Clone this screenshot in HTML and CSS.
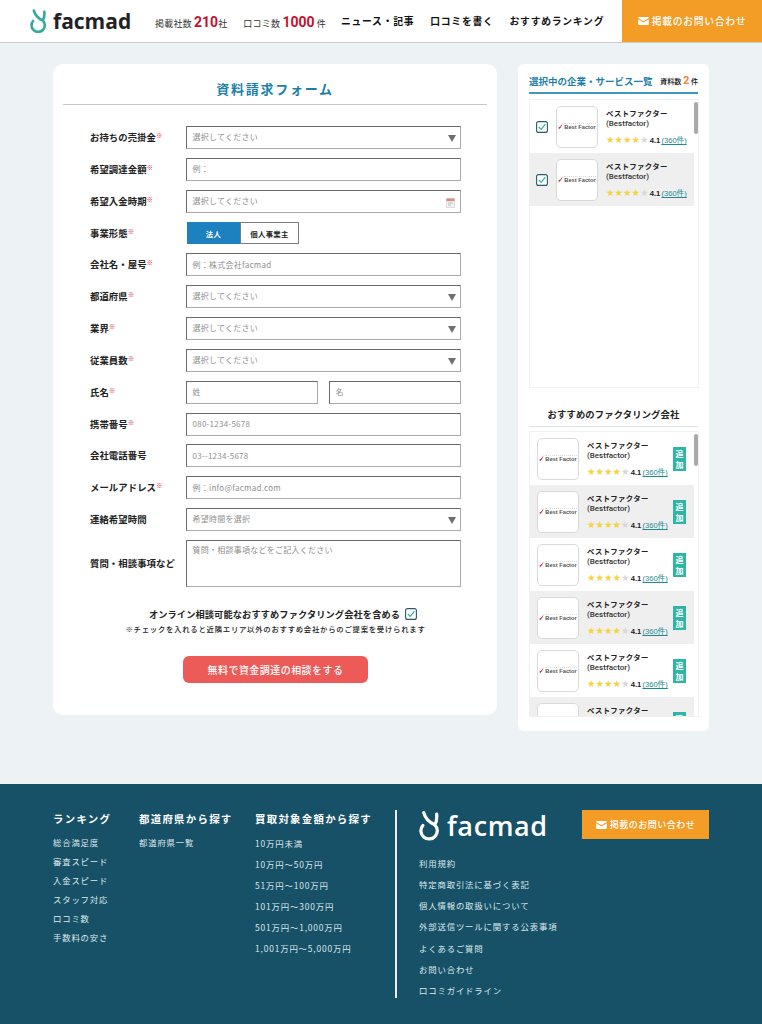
FILE: index.html
```html
<!DOCTYPE html>
<html lang="ja">
<head>
<meta charset="utf-8">
<title>資料請求フォーム</title>
<link rel="stylesheet" href="styles.css">
</head>
<body>
<svg class="defs" width="0" height="0" aria-hidden="true">
  <defs>
    <symbol id="logo-mark" viewBox="0 0 22 31">
      <path d="M4 15.5 A8.6 8.6 0 1 0 16.5 14.8 M5 2 C6.5 8 10.5 12 16.5 14.8 M18.5 3.5 C19 8 18.5 11.5 16.5 14.8" fill="none" stroke="currentColor" stroke-width="3.4" stroke-linecap="round" stroke-linejoin="round"/>
    </symbol>
    <symbol id="mail" viewBox="0 0 12 9">
      <path d="M0 1 A1 1 0 0 1 1 0 H11 A1 1 0 0 1 12 1 L6 4.8 Z M0 2.4 V8 A1 1 0 0 0 1 9 H11 A1 1 0 0 0 12 8 V2.4 L6 6.2 Z" fill="currentColor"/>
    </symbol>
    <symbol id="check" viewBox="0 0 12 12">
      <rect x=".6" y=".6" width="10.8" height="10.8" rx="2" fill="#fff" stroke="#2b5a66" stroke-width="1.1"/>
      <path d="M2.8 6 L5.2 8.4 L9.4 3.2" fill="none" stroke="#2fb3a5" stroke-width="1.2"/>
    </symbol>
    <symbol id="caret" viewBox="0 0 8 7">
      <path d="M0 0 H8 L4 7 Z" fill="#6f6f6f"/>
    </symbol>
    <symbol id="bf-swoosh" viewBox="0 0 5 7">
      <path d="M4.6 0.3 C4 3 2.6 5.6 0.3 6.6 C1.5 5 0.6 4.6 0.2 4.6 C1.8 4.4 3.4 2.6 4.6 0.3 Z" fill="#b8304a"/>
    </symbol>
  </defs>
</svg>

<header class="site-header">
  <a class="logo logo-head">
    <svg class="logo-mark"><use href="#logo-mark"/></svg>
    <span class="logo-text">facmad</span>
  </a>
  <div class="stat">掲載社数 <b>210</b>社</div>
  <div class="stat stat-2">口コミ数 <b>1000</b> 件</div>
  <nav class="head-nav">
    <a>ニュース・記事</a>
    <a>口コミを書く</a>
    <a>おすすめランキング</a>
  </nav>
  <a class="head-cta"><svg class="mail"><use href="#mail"/></svg>掲載のお問い合わせ</a>
</header>

<main class="main">
  <section class="form-card">
    <h1 class="form-title">資料請求フォーム</h1>
    <form class="form">
      <div class="row"><div class="lab">お持ちの売掛金<i>※</i></div><div class="field sel">選択してください<svg class="caret"><use href="#caret"/></svg></div></div>
      <div class="row"><div class="lab">希望調達金額<i>※</i></div><div class="field">例：</div></div>
      <div class="row"><div class="lab">希望入金時期<i>※</i></div><div class="field sel">選択してください
        <svg class="cal" viewBox="0 0 9 10"><rect x=".5" y=".5" width="8" height="9" fill="#f3f3f3" stroke="#ddd"/><rect x=".5" y=".5" width="8" height="2.6" fill="#d98b80"/><path d="M2 5h5M2 7h3" stroke="#aaa" stroke-width=".8"/></svg></div></div>
      <div class="row"><div class="lab">事業形態<i>※</i></div>
        <div class="toggle"><span class="tg on">法人</span><span class="tg">個人事業主</span></div></div>
      <div class="row"><div class="lab">会社名・屋号<i>※</i></div><div class="field">例：株式会社facmad</div></div>
      <div class="row"><div class="lab">都道府県<i>※</i></div><div class="field sel">選択してください<svg class="caret"><use href="#caret"/></svg></div></div>
      <div class="row"><div class="lab">業界<i>※</i></div><div class="field sel">選択してください<svg class="caret"><use href="#caret"/></svg></div></div>
      <div class="row"><div class="lab">従業員数<i>※</i></div><div class="field sel">選択してください<svg class="caret"><use href="#caret"/></svg></div></div>
      <div class="row"><div class="lab">氏名<i>※</i></div><div class="pair"><div class="field">姓</div><div class="field">名</div></div></div>
      <div class="row"><div class="lab">携帯番号<i>※</i></div><div class="field">080-1234-5678</div></div>
      <div class="row"><div class="lab">会社電話番号</div><div class="field">03--1234-5678</div></div>
      <div class="row"><div class="lab">メールアドレス<i>※</i></div><div class="field">例：info@facmad.com</div></div>
      <div class="row"><div class="lab">連絡希望時間</div><div class="field sel">希望時間を選択<svg class="caret"><use href="#caret"/></svg></div></div>
      <div class="row row-area"><div class="lab">質問・相談事項など</div><div class="field area">質問・相談事項などをご記入ください</div></div>
      <div class="online"><span>オンライン相談可能なおすすめファクタリング会社を含める</span><svg class="check-sm"><use href="#check"/></svg></div>
      <p class="note">※チェックを入れると近隣エリア以外のおすすめ会社からのご提案を受けられます</p>
      <a class="submit">無料で資金調達の相談をする</a>
    </form>
  </section>

  <aside class="side">
    <div class="side-head"><h2>選択中の企業・サービス一覧</h2><span class="count">資料数 <b>2</b> 件</span></div>
    <div class="list list-selected">
      <span class="thumb"></span>
      <div class="item">
        <svg class="check"><use href="#check"/></svg>
        <div class="bf"><svg class="bf-mark"><use href="#bf-swoosh"/></svg><span class="bf-text">Best Factor</span></div>
        <div class="info"><p class="nm">ベストファクター</p><p class="en">(Bestfactor)</p><p class="rate"><span class="stars">★★★★<em>★</em></span> <b>4.1</b> <u>(360件)</u></p></div>
      </div>
      <div class="item alt">
        <svg class="check"><use href="#check"/></svg>
        <div class="bf"><svg class="bf-mark"><use href="#bf-swoosh"/></svg><span class="bf-text">Best Factor</span></div>
        <div class="info"><p class="nm">ベストファクター</p><p class="en">(Bestfactor)</p><p class="rate"><span class="stars">★★★★<em>★</em></span> <b>4.1</b> <u>(360件)</u></p></div>
      </div>
    </div>
    <h2 class="rec-title">おすすめのファクタリング会社</h2>
    <div class="list list-rec">
      <span class="thumb"></span>
      <div class="item rec"><div class="bf"><svg class="bf-mark"><use href="#bf-swoosh"/></svg><span class="bf-text">Best Factor</span></div><div class="info"><p class="nm">ベストファクター</p><p class="en">(Bestfactor)</p><p class="rate"><span class="stars">★★★★<em>★</em></span> <b>4.1</b> <u>(360件)</u></p></div><span class="add">追加</span></div>
      <div class="item rec alt"><div class="bf"><svg class="bf-mark"><use href="#bf-swoosh"/></svg><span class="bf-text">Best Factor</span></div><div class="info"><p class="nm">ベストファクター</p><p class="en">(Bestfactor)</p><p class="rate"><span class="stars">★★★★<em>★</em></span> <b>4.1</b> <u>(360件)</u></p></div><span class="add">追加</span></div>
      <div class="item rec"><div class="bf"><svg class="bf-mark"><use href="#bf-swoosh"/></svg><span class="bf-text">Best Factor</span></div><div class="info"><p class="nm">ベストファクター</p><p class="en">(Bestfactor)</p><p class="rate"><span class="stars">★★★★<em>★</em></span> <b>4.1</b> <u>(360件)</u></p></div><span class="add">追加</span></div>
      <div class="item rec alt"><div class="bf"><svg class="bf-mark"><use href="#bf-swoosh"/></svg><span class="bf-text">Best Factor</span></div><div class="info"><p class="nm">ベストファクター</p><p class="en">(Bestfactor)</p><p class="rate"><span class="stars">★★★★<em>★</em></span> <b>4.1</b> <u>(360件)</u></p></div><span class="add">追加</span></div>
      <div class="item rec"><div class="bf"><svg class="bf-mark"><use href="#bf-swoosh"/></svg><span class="bf-text">Best Factor</span></div><div class="info"><p class="nm">ベストファクター</p><p class="en">(Bestfactor)</p><p class="rate"><span class="stars">★★★★<em>★</em></span> <b>4.1</b> <u>(360件)</u></p></div><span class="add">追加</span></div>
      <div class="item rec alt"><div class="bf"><svg class="bf-mark"><use href="#bf-swoosh"/></svg><span class="bf-text">Best Factor</span></div><div class="info"><p class="nm">ベストファクター</p><p class="en">(Bestfactor)</p><p class="rate"><span class="stars">★★★★<em>★</em></span> <b>4.1</b> <u>(360件)</u></p></div><span class="add">追加</span></div>
    </div>
  </aside>
</main>

<footer class="footer">
  <div class="f-col f-c1">
    <h3>ランキング</h3>
    <ul><li>総合満足度</li><li>審査スピード</li><li>入金スピード</li><li>スタッフ対応</li><li>口コミ数</li><li>手数料の安さ</li></ul>
  </div>
  <div class="f-col f-c2">
    <h3>都道府県から探す</h3>
    <ul><li>都道府県一覧</li></ul>
  </div>
  <div class="f-col f-c3">
    <h3>買取対象金額から探す</h3>
    <ul><li>10万円未満</li><li>10万円～50万円</li><li>51万円～100万円</li><li>101万円～300万円</li><li>501万円～1,000万円</li><li>1,001万円～5,000万円</li></ul>
  </div>
  <div class="f-right">
    <div class="f-top">
      <a class="logo logo-foot"><svg class="logo-mark"><use href="#logo-mark"/></svg><span class="logo-text">facmad</span></a>
      <a class="foot-cta"><svg class="mail"><use href="#mail"/></svg>掲載のお問い合わせ</a>
    </div>
    <ul class="f-links"><li>利用規約</li><li>特定商取引法に基づく表記</li><li>個人情報の取扱いについて</li><li>外部送信ツールに関する公表事項</li><li>よくあるご質問</li><li>お問い合わせ</li><li>口コミガイドライン</li></ul>
  </div>
</footer>
</body>
</html>
```

FILE: styles.css
```css
* { box-sizing: border-box; }
html, body { margin: 0; padding: 0; }
body {
  width: 762px;
  height: 1024px;
  overflow: hidden;
  background: #edf2f5;
  color: #111;
  font-family: "Noto Sans CJK JP", "Noto Sans", sans-serif;
  font-variant-emoji: text;
}
p, h1, h2, h3, ul { margin: 0; padding: 0; }
ul { list-style: none; }
.defs { position: absolute; }

/* header */
.site-header {
  display: flex;
  align-items: center;
  height: 43px;
  background: #fff;
  border-bottom: 1px solid #c9cdd0;
  padding-left: 30px;
}
.logo { display: flex; align-items: center; flex: none; }
.logo-head { width: 125px; color: #111; }
.logo-head .logo-mark { width: 17px; height: 24px; color: #35a99c; margin-right: 6px; flex: none; }
.logo-text { font-family: "Open Sans", sans-serif; font-weight: 600; letter-spacing: .3px; line-height: 1; }
.logo-head .logo-text { font-size: 21px; font-weight: 700; color: #222; letter-spacing: 0; }
.stat { flex: none; font-size: 9px; color: #333; letter-spacing: .2px; white-space: nowrap; margin-right: 16px; margin-top: 1px; }
.stat-2 { margin-right: 15px; }
.stat b { font-family: "Roboto", sans-serif; font-size: 14px; color: #c8102e; font-weight: 700; letter-spacing: 0; }
.head-nav { display: flex; flex: none; gap: 16px; font-size: 9.8px; font-weight: 700; letter-spacing: .75px; white-space: nowrap; }
.head-cta {
  position: absolute;
  right: 0;
  top: 0;
  width: 140px;
  height: 42px;
  display: flex;
  align-items: center;
  justify-content: center;
  background: #f39d26;
  color: #fff;
  font-size: 9.8px;
  font-weight: 500;
  letter-spacing: .7px;
}
.mail { width: 11px; height: 8px; margin-right: 3px; flex: none; }

/* layout */
.main {
  display: flex;
  align-items: flex-start;
  gap: 21px;
  padding: 21px 0 0 53px;
  height: 741px;
}

/* form */
.form-card { width: 444px; height: 651px; background: #fff; border-radius: 10px; padding: 0 10px; }
.form-title {
  height: 41px;
  border-bottom: 1px solid #c5c8ca;
  text-align: center;
  font-size: 13px;
  line-height: 50px;
  font-weight: 700;
  letter-spacing: 1.75px;
  color: #1d7fa8;
}
.form { padding: 21px 26px 0 27px; }
.row { display: flex; align-items: center; height: 23px; margin-bottom: 8.85px; }
.lab { width: 96px; flex: none; font-size: 9.4px; font-weight: 700; color: #222; white-space: nowrap; letter-spacing: .05px; padding-bottom: 1px; }
.lab i { font-style: normal; color: #d9303c; font-size: 6.5px; vertical-align: 3px; font-weight: 700; }
.field {
  position: relative;
  flex: 1;
  height: 23px;
  display: flex;
  align-items: center;
  padding: 0 0 1.5px 5.5px;
  font-size: 8px;
  letter-spacing: .25px;
  color: #909090;
  background: #fff;
  border: 1px solid #8b8b8b;
  border-top-color: #6a6a6a;
  border-left-color: #6a6a6a;
  border-right-color: #aaa;
  border-bottom-color: #aaa;
}
.caret { position: absolute; right: 4px; top: 8px; width: 8px; height: 7px; }
.cal { position: absolute; right: 5px; top: 7px; width: 9px; height: 10px; }
.toggle { display: flex; height: 22px; margin-left: 1px; border: 1px solid #7d7d7d; }
.tg { width: 53px; display: flex; align-items: center; justify-content: center; font-size: 7.4px; font-weight: 700; letter-spacing: .3px; color: #222; background: #fff; }
.tg.on { width: 53px; background: #1d80bf; color: #fff; margin: -1px 0 -1px -1px; }
.tg:last-child { width: 58px; border-left: 1px solid #7d7d7d; }
.pair { flex: 1; display: flex; gap: 11px; }
.row-area { height: 47.5px; margin-bottom: 20px; }
.area { height: 47.5px; align-items: flex-start; padding-top: 3px; }
.online { display: flex; justify-content: center; align-items: center; gap: 5px; font-size: 9.2px; font-weight: 700; letter-spacing: .13px; height: 14px; margin-left: 15px; color: #222; }
.check-sm { width: 12px; height: 12px; }
.note { text-align: center; font-size: 7.4px; font-weight: 500; letter-spacing: .72px; margin-top: 2px; color: #222; white-space: nowrap; }
.submit {
  display: flex;
  align-items: center;
  justify-content: center;
  width: 185px;
  height: 27px;
  margin: 22px 0 0 93px;
  border-radius: 6px;
  background: #ec5b57;
  color: #fff;
  font-size: 10px;
  font-weight: 500;
  letter-spacing: .45px;
}

/* sidebar */
.side { width: 191px; height: 667px; background: #fff; border-radius: 6px; padding: 0 11px; }
.side-head { display: flex; align-items: flex-end; justify-content: space-between; height: 30px; border-bottom: 2px solid #3f97c0; padding-bottom: 4px; }
.side-head h2 { font-size: 9.5px; font-weight: 700; color: #1d7fa8; letter-spacing: 0; white-space: nowrap; line-height: 14px; }
.count { font-size: 7.1px; font-weight: 500; white-space: nowrap; line-height: 13px; }
.count b { color: #e8853a; font-size: 11px; font-family: "Roboto", sans-serif; }
.list { position: relative; width: 170px; border: 1px solid #eef0f1; overflow: hidden; }
.list-selected { height: 289px; margin-top: 5px; }
.list-rec { height: 286px; margin-top: 4px; }
.thumb { position: absolute; right: 0; top: 2px; width: 4px; height: 32px; background: #a9a9a9; border-radius: 2px; z-index: 1; }
.item { display: flex; align-items: center; width: 164px; height: 53px; padding-left: 6px; }
.item.alt { background: #efefef; }
.item.rec { padding-left: 7px; }
.check { width: 12px; height: 12px; flex: none; margin-right: 8px; }
.bf { display: flex; align-items: center; justify-content: center; gap: 1px; flex: none; width: 42px; height: 42px; background: #fff; border: 1px solid #d9d9d9; border-radius: 5px; white-space: nowrap; }
.bf-mark { width: 5px; height: 7px; flex: none; }
.bf-text { font-family: "Liberation Sans", sans-serif; font-size: 5.7px; font-weight: 700; color: #555; border-top: 1px dotted #ddd; line-height: 6px; }
.info { margin-left: 8px; min-width: 0; flex: none; width: 82px; }
.item.rec .info { width: 84px; }
.nm { font-size: 7.4px; font-weight: 700; letter-spacing: .35px; line-height: 11px; white-space: nowrap; color: #222; }
.en { font-family: "Roboto", sans-serif; font-size: 8px; font-weight: 500; line-height: 11px; color: #333; }
.rate { font-size: 7.6px; line-height: 10px; margin-top: 6.5px; white-space: nowrap; word-spacing: -1px; font-family: "Liberation Sans", "Noto Sans CJK JP", sans-serif; }
.stars { color: #f5d33f; font-size: 9.5px; letter-spacing: 0; font-family: "DejaVu Sans", sans-serif; }
.stars em { font-style: normal; color: #d9d9d9; }
.rate b { font-size: 7.6px; color: #222; }
.rate u { color: #1e8a92; }
.add { display: flex; align-items: center; justify-content: center; flex: none; width: 13px; height: 24px; margin-left: 2px; background: #2fb5a6; color: #fff; font-size: 8px; font-weight: 700; line-height: 11px; text-align: center; }
.rec-title { margin-top: 14px; height: 25px; border-bottom: 1px solid #dfe1e2; text-align: center; font-size: 9.3px; font-weight: 700; line-height: 25px; letter-spacing: .15px; color: #222; }

/* footer */
.footer { position: relative; display: flex; height: 240px; background: #175168; color: #dfe8eb; padding: 27px 0 0 53px; }
.f-col h3 { font-size: 10.4px; font-weight: 700; letter-spacing: 1.3px; color: #fff; line-height: 15px; white-space: nowrap; }
.f-col ul { margin-top: 7px; }
.f-c1 { width: 86px; }
.f-c2 { width: 116px; }
.f-c3 { width: 140px; flex: none; }
.f-col li { font-size: 8.4px; letter-spacing: .82px; line-height: 19px; white-space: nowrap; }
.f-c3 li { line-height: 21.1px; letter-spacing: .85px; }
.f-right { width: 316px; flex: none; padding-left: 22px; border-left: 2px solid #e8eef0; height: 188px; margin-top: -1px; }
.f-top { display: flex; align-items: flex-start; height: 43px; }
.logo-foot { width: 163px; color: #fff; }
.logo-foot .logo-mark { width: 21px; height: 31px; margin-right: 7px; flex: none; }
.logo-foot .logo-text { font-size: 27px; font-weight: 600; color: #fff; letter-spacing: .6px; }
.foot-cta { display: flex; align-items: center; justify-content: center; flex: none; width: 127px; height: 29px; background: #f39d26; color: #fff; font-size: 9px; font-weight: 500; letter-spacing: .5px; }
.f-links li { font-size: 8.4px; letter-spacing: .85px; line-height: 21.15px; white-space: nowrap; }
```
